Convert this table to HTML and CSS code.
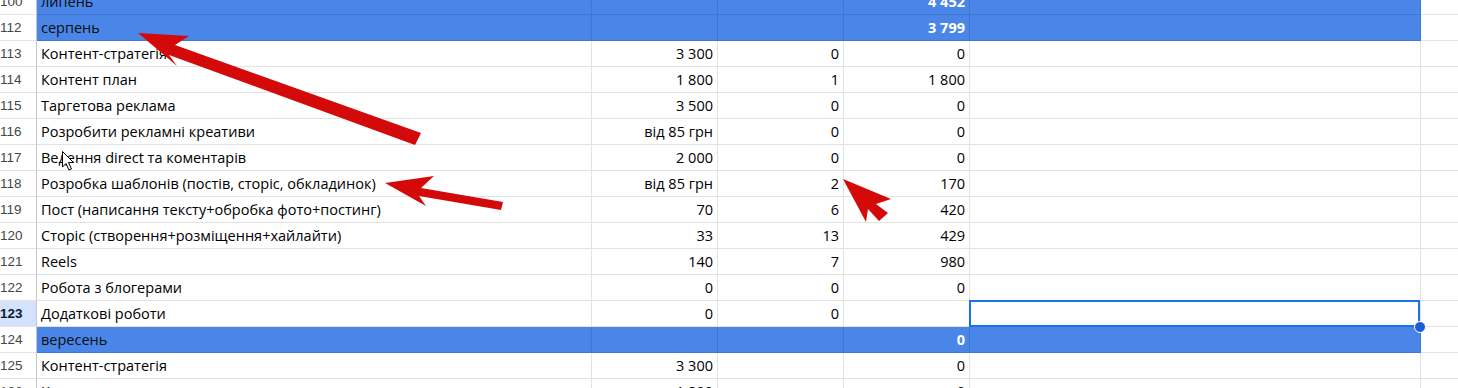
FILE: index.html
```html
<!DOCTYPE html>
<html lang="uk">
<head>
<meta charset="utf-8">
<title>Sheet</title>
<link rel="stylesheet" href="styles.css">
</head>
<body>
<div class="sheet">
  <div class="rows">
    <div class="row blue">
      <div class="rh">100</div>
      <div class="cell txt dark">липень</div>
      <div class="cell num"></div>
      <div class="cell num"></div>
      <div class="cell num wb">4 452</div>
      <div class="cell"></div>
      <div class="cell plain"></div>
    </div>
    <div class="row blue">
      <div class="rh">112</div>
      <div class="cell txt dark">серпень</div>
      <div class="cell num"></div>
      <div class="cell num"></div>
      <div class="cell num wb">3 799</div>
      <div class="cell"></div>
      <div class="cell plain"></div>
    </div>
    <div class="row">
      <div class="rh">113</div>
      <div class="cell txt">Контент-стратегія</div>
      <div class="cell num">3 300</div>
      <div class="cell num">0</div>
      <div class="cell num">0</div>
      <div class="cell"></div>
      <div class="cell plain"></div>
    </div>
    <div class="row">
      <div class="rh">114</div>
      <div class="cell txt">Контент план</div>
      <div class="cell num">1 800</div>
      <div class="cell num">1</div>
      <div class="cell num">1 800</div>
      <div class="cell"></div>
      <div class="cell plain"></div>
    </div>
    <div class="row">
      <div class="rh">115</div>
      <div class="cell txt">Таргетова реклама</div>
      <div class="cell num">3 500</div>
      <div class="cell num">0</div>
      <div class="cell num">0</div>
      <div class="cell"></div>
      <div class="cell plain"></div>
    </div>
    <div class="row">
      <div class="rh">116</div>
      <div class="cell txt">Розробити рекламні креативи</div>
      <div class="cell num">від 85 грн</div>
      <div class="cell num">0</div>
      <div class="cell num">0</div>
      <div class="cell"></div>
      <div class="cell plain"></div>
    </div>
    <div class="row">
      <div class="rh">117</div>
      <div class="cell txt">Ведення direct та коментарів</div>
      <div class="cell num">2 000</div>
      <div class="cell num">0</div>
      <div class="cell num">0</div>
      <div class="cell"></div>
      <div class="cell plain"></div>
    </div>
    <div class="row">
      <div class="rh">118</div>
      <div class="cell txt">Розробка шаблонів (постів, сторіс, обкладинок)</div>
      <div class="cell num">від 85 грн</div>
      <div class="cell num">2</div>
      <div class="cell num">170</div>
      <div class="cell"></div>
      <div class="cell plain"></div>
    </div>
    <div class="row">
      <div class="rh">119</div>
      <div class="cell txt">Пост (написання тексту+обробка фото+постинг)</div>
      <div class="cell num">70</div>
      <div class="cell num">6</div>
      <div class="cell num">420</div>
      <div class="cell"></div>
      <div class="cell plain"></div>
    </div>
    <div class="row">
      <div class="rh">120</div>
      <div class="cell txt">Сторіс (створення+розміщення+хайлайти)</div>
      <div class="cell num">33</div>
      <div class="cell num">13</div>
      <div class="cell num">429</div>
      <div class="cell"></div>
      <div class="cell plain"></div>
    </div>
    <div class="row">
      <div class="rh">121</div>
      <div class="cell txt">Reels</div>
      <div class="cell num">140</div>
      <div class="cell num">7</div>
      <div class="cell num">980</div>
      <div class="cell"></div>
      <div class="cell plain"></div>
    </div>
    <div class="row">
      <div class="rh">122</div>
      <div class="cell txt">Робота з блогерами</div>
      <div class="cell num">0</div>
      <div class="cell num">0</div>
      <div class="cell num">0</div>
      <div class="cell"></div>
      <div class="cell plain"></div>
    </div>
    <div class="row">
      <div class="rh active">123</div>
      <div class="cell txt">Додаткові роботи</div>
      <div class="cell num">0</div>
      <div class="cell num">0</div>
      <div class="cell num"></div>
      <div class="cell selected"><span class="handle"></span></div>
      <div class="cell plain"></div>
    </div>
    <div class="row blue">
      <div class="rh">124</div>
      <div class="cell txt dark">вересень</div>
      <div class="cell num"></div>
      <div class="cell num"></div>
      <div class="cell num wb">0</div>
      <div class="cell"></div>
      <div class="cell plain"></div>
    </div>
    <div class="row">
      <div class="rh">125</div>
      <div class="cell txt">Контент-стратегія</div>
      <div class="cell num">3 300</div>
      <div class="cell num"></div>
      <div class="cell num">0</div>
      <div class="cell"></div>
      <div class="cell plain"></div>
    </div>
    <div class="row">
      <div class="rh">126</div>
      <div class="cell txt">Контент план</div>
      <div class="cell num">1 800</div>
      <div class="cell num"></div>
      <div class="cell num">0</div>
      <div class="cell"></div>
      <div class="cell plain"></div>
    </div>
  </div>

  <svg class="overlay" width="1458" height="388" viewBox="0 0 1458 388" aria-hidden="true">
    <polygon class="arrow" points="138,33 189,36 175,45 421,133 415,145 169,55 177,66"/>
    <polygon class="arrow" points="385,183 434,176 421,188 503,202 501,210 419,196 426,206"/>
    <polygon class="arrow" points="843,179 891,199 876,204 888,213 879,221 868,209 866,222"/>
    <path class="cursor" d="M62.5,151.5 L62.5,167 L66,163.5 L69,170 L71.5,169 L68.5,162.5 L73.5,162.5 Z"/>
  </svg>
</div>
</body>
</html>
```

FILE: styles.css
```css
html, body {
  margin: 0;
  padding: 0;
  background: #ffffff;
}

body {
  width: 1458px;
  height: 388px;
  overflow: hidden;
  font-family: "Liberation Sans", Arial, sans-serif;
}

.sheet {
  position: relative;
  width: 1458px;
  height: 388px;
  overflow: hidden;
}

.rows {
  margin-top: -11px;
}

.row {
  display: grid;
  grid-template-columns: 37px 555px 126px 126px 126px 451px 1fr;
  height: 26px;
}

.rh,
.cell {
  box-sizing: border-box;
  height: 26px;
  border-right: 1px solid #e2e2e2;
  border-bottom: 1px solid #e2e2e2;
  white-space: nowrap;
  overflow: hidden;
}

.rh {
  border-right-color: #c7c7c7;
  text-align: right;
  padding-right: 18px;
  font-size: 13.5px;
  line-height: 25px;
  color: #444746;
}

.rh.active {
  background: #d3e3fd;
  color: #0b1a33;
  font-weight: 700;
}

.cell {
  font-family: "Open Sans", "Liberation Sans", sans-serif;
  font-size: 14.5px;
  line-height: 25px;
  color: #000000;
  padding: 0 4px;
}

.cell.num {
  text-align: right;
}

.cell.plain {
  border-right: none;
}

.row.blue .cell:not(.plain) {
  background: #4a86e8;
  border-right-color: #3f76d2;
  border-bottom-color: #3f76d2;
}

.row.blue .cell.plain {
  border-bottom-color: #e2e2e2;
}

.cell.dark {
  color: #0d0d0d;
}

.cell.wb {
  color: #ffffff;
  font-weight: 700;
}

.cell.selected {
  position: relative;
  overflow: visible;
}

.cell.selected::after {
  content: "";
  position: absolute;
  top: -1px;
  left: -1px;
  right: 0;
  bottom: -1px;
  border: 2px solid #1a73e8;
  pointer-events: none;
}

.handle {
  position: absolute;
  right: -6px;
  bottom: -7px;
  width: 10px;
  height: 10px;
  border-radius: 50%;
  background: #1a5fd6;
  border: 1px solid #ffffff;
  z-index: 2;
}

.overlay {
  position: absolute;
  left: 0;
  top: 0;
  pointer-events: none;
}

.arrow {
  fill: #d40a0a;
}

.cursor {
  fill: #ffffff;
  stroke: #000000;
  stroke-width: 1;
  stroke-linejoin: round;
}
```
